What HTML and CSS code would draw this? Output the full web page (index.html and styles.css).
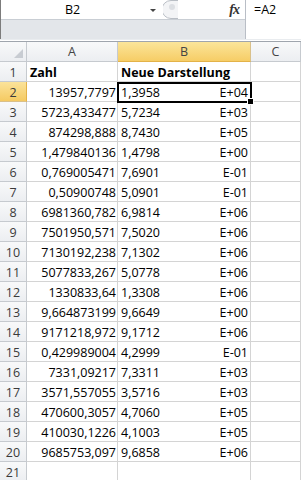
FILE: index.html
```html
<!DOCTYPE html>
<html lang="de">

<head>
    <meta charset="UTF-8">
    <meta name="viewport" content="width=device-width, initial-scale=1.0">
    <title>Neue Darstellung</title>
    <link rel="stylesheet" href="styles.css">
</head>

<body>

    <div class="toolbar">
        <div class="left-part">
            <div class="name-row">
                <div class="namebox">B2</div>
                <div class="dropdown"></div>
                <svg class="splitter" width="20" height="19" viewBox="0 0 20 19">
                    <path d="M15 0.5 H8 A8.5 8.5 0 0 0 8 18.5 H15" fill="#f3f4f6" stroke="#b9bec5" />
                    <circle cx="9" cy="7" r="3" fill="#dcdfe3" />
                </svg>
                <span class="fx">fx</span>
            </div>
            <div class="name-bottom"></div>
        </div>
        <div class="formula">=A2</div>
    </div>
    <div class="gap"></div>

    <div class="sheet">
        <div class="cell hd corner"></div>
        <div class="cell hd col">A</div>
        <div class="cell hd col sel-col">B</div>
        <div class="cell hd col">C</div>

        <div class="cell hd row">1</div>
        <div class="cell bold">Zahl</div>
        <div class="cell bold">Neue Darstellung</div>
        <div class="cell"></div>

        <div class="cell hd row sel-row">2</div>
        <div class="cell num">13957,7797</div>
        <div class="cell sci active"><span>1,3958</span><span>E+04</span></div>
        <div class="cell"></div>

        <div class="cell hd row">3</div>
        <div class="cell num">5723,433477</div>
        <div class="cell sci"><span>5,7234</span><span>E+03</span></div>
        <div class="cell"></div>

        <div class="cell hd row">4</div>
        <div class="cell num">874298,888</div>
        <div class="cell sci"><span>8,7430</span><span>E+05</span></div>
        <div class="cell"></div>

        <div class="cell hd row">5</div>
        <div class="cell num">1,479840136</div>
        <div class="cell sci"><span>1,4798</span><span>E+00</span></div>
        <div class="cell"></div>

        <div class="cell hd row">6</div>
        <div class="cell num">0,769005471</div>
        <div class="cell sci"><span>7,6901</span><span>E-01</span></div>
        <div class="cell"></div>

        <div class="cell hd row">7</div>
        <div class="cell num">0,50900748</div>
        <div class="cell sci"><span>5,0901</span><span>E-01</span></div>
        <div class="cell"></div>

        <div class="cell hd row">8</div>
        <div class="cell num">6981360,782</div>
        <div class="cell sci"><span>6,9814</span><span>E+06</span></div>
        <div class="cell"></div>

        <div class="cell hd row">9</div>
        <div class="cell num">7501950,571</div>
        <div class="cell sci"><span>7,5020</span><span>E+06</span></div>
        <div class="cell"></div>

        <div class="cell hd row">10</div>
        <div class="cell num">7130192,238</div>
        <div class="cell sci"><span>7,1302</span><span>E+06</span></div>
        <div class="cell"></div>

        <div class="cell hd row">11</div>
        <div class="cell num">5077833,267</div>
        <div class="cell sci"><span>5,0778</span><span>E+06</span></div>
        <div class="cell"></div>

        <div class="cell hd row">12</div>
        <div class="cell num">1330833,64</div>
        <div class="cell sci"><span>1,3308</span><span>E+06</span></div>
        <div class="cell"></div>

        <div class="cell hd row">13</div>
        <div class="cell num">9,664873199</div>
        <div class="cell sci"><span>9,6649</span><span>E+00</span></div>
        <div class="cell"></div>

        <div class="cell hd row">14</div>
        <div class="cell num">9171218,972</div>
        <div class="cell sci"><span>9,1712</span><span>E+06</span></div>
        <div class="cell"></div>

        <div class="cell hd row">15</div>
        <div class="cell num">0,429989004</div>
        <div class="cell sci"><span>4,2999</span><span>E-01</span></div>
        <div class="cell"></div>

        <div class="cell hd row">16</div>
        <div class="cell num">7331,09217</div>
        <div class="cell sci"><span>7,3311</span><span>E+03</span></div>
        <div class="cell"></div>

        <div class="cell hd row">17</div>
        <div class="cell num">3571,557055</div>
        <div class="cell sci"><span>3,5716</span><span>E+03</span></div>
        <div class="cell"></div>

        <div class="cell hd row">18</div>
        <div class="cell num">470600,3057</div>
        <div class="cell sci"><span>4,7060</span><span>E+05</span></div>
        <div class="cell"></div>

        <div class="cell hd row">19</div>
        <div class="cell num">410030,1226</div>
        <div class="cell sci"><span>4,1003</span><span>E+05</span></div>
        <div class="cell"></div>

        <div class="cell hd row">20</div>
        <div class="cell num">9685753,097</div>
        <div class="cell sci"><span>9,6858</span><span>E+06</span></div>
        <div class="cell"></div>

        <div class="cell hd row">21</div>
        <div class="cell"></div>
        <div class="cell"></div>
        <div class="cell"></div>
    </div>

</body>

</html>
```

FILE: styles.css
```css
body {
    margin: 0;
    width: 301px;
    height: 480px;
    overflow: hidden;
    background: #fff;
    font-family: "Open Sans", Arial, sans-serif;
    font-size: 12.5px;
    color: #000;
}

/* Formelleiste */
.toolbar {
    display: flex;
    height: 39px;
}

.left-part {
    width: 245px;
    box-sizing: border-box;
    border-left: 1px solid #7c7c7c;
    display: flex;
    flex-direction: column;
}

.name-row {
    height: 20px;
    box-sizing: border-box;
    border-bottom: 1px solid #c9ced4;
    display: flex;
    align-items: center;
    background: #fff;
}

.namebox {
    width: 143px;
    text-align: center;
    line-height: 19px;
}

.dropdown {
    width: 0;
    height: 0;
    margin: 1px 5px 0 6px;
    border-left: 3px solid transparent;
    border-right: 3px solid transparent;
    border-top: 3px solid #444;
}

.splitter {
    display: block;
    margin-left: 2px;
}

.fx {
    margin-left: auto;
    margin-right: 6px;
    font-family: "Liberation Serif", "DejaVu Serif", serif;
    font-style: italic;
    font-weight: bold;
    font-size: 14px;
    color: #333;
    letter-spacing: -1px;
}

.name-bottom {
    flex: 1;
    background: #e3e6ea;
}

.formula {
    flex: 1;
    background: #fff;
    border-left: 1px solid #b9bec6;
    padding: 0 0 0 8px;
    line-height: 20px;
}

.gap {
    height: 3px;
    box-sizing: border-box;
    background: #fff;
    border-top: 1px solid #e9ecef;
    border-bottom: 1px solid #9fa5ad;
}

/* Tabelle */
.sheet {
    display: grid;
    grid-template-columns: 27px 91px 133px 50px;
    grid-auto-rows: 20px;
}

.cell {
    box-sizing: border-box;
    border-right: 1px solid #d4d4d4;
    border-bottom: 1px solid #d4d4d4;
    padding: 0 2px 0 3px;
    line-height: 17px;
    display: flex;
    align-items: flex-end;
    white-space: nowrap;
    overflow: hidden;
}

.hd {
    background: linear-gradient(#f8f9fa, #eceef1);
    border-color: #c6cacf;
    color: #3a3a3a;
    justify-content: center;
    padding: 0;
}

.col {
    align-items: center;
    color: #444;
}

.col:last-child {
    justify-content: flex-end;
    padding-right: 5px;
}

.corner {
    position: relative;
}

.corner::after {
    content: "";
    position: absolute;
    right: 3px;
    bottom: 3px;
    border-left: 9px solid transparent;
    border-bottom: 9px solid #c8ccd2;
}

.sel-col {
    background: linear-gradient(#fbe59a, #f6cd66);
    border-bottom-color: #e3b248;
    border-right-color: #d9c08a;
}

.sel-row {
    background: linear-gradient(#fbe39a, #f5ca62);
    border-right-color: #e3b248;
    border-bottom-color: #d9c08a;
}

.bold {
    font-weight: bold;
}

.num {
    justify-content: flex-end;
    padding-right: 1px;
}

.sci {
    justify-content: space-between;
    padding-right: 2px;
}

.active {
    position: relative;
    overflow: visible;
}

.active::after {
    content: "";
    position: absolute;
    top: 0;
    left: -1px;
    right: -2px;
    bottom: -2px;
    border: 2px solid #000;
}

.active::before {
    content: "";
    position: absolute;
    right: -4px;
    bottom: -4px;
    width: 5px;
    height: 5px;
    background: #000;
    border: 1px solid #fff;
    z-index: 1;
}
```
